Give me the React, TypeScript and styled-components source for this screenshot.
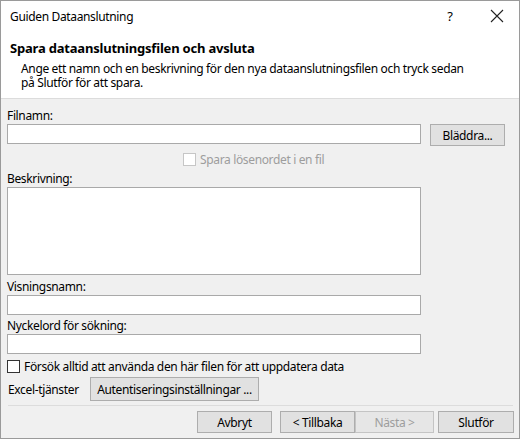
import React from "react";
import styled, { createGlobalStyle } from "styled-components";

const Global = createGlobalStyle`
  html, body { margin: 0; padding: 0; background: #f0f0f0; }
  body { font-family: "Noto Sans", "Open Sans", sans-serif; font-size: 12px; letter-spacing: -0.35px; color: #000; }
  * { box-sizing: border-box; }
`;

const Window = styled.div`
  width: 520px;
  height: 439px;
  border: 1px solid #9a9a9a;
  background: #f0f0f0;
  display: flex;
  flex-direction: column;
  overflow: hidden;
`;

const TitleBar = styled.div`
  height: 30px;
  background: #fff;
  display: flex;
  align-items: center;
  padding-left: 9px;
  font-size: 12px;
`;

const TitleText = styled.div`
  flex: 1;
`;

const Help = styled.div`
  width: 20px;
  text-align: center;
  font-size: 13px;
  margin-right: 30px;
`;

const CloseBtn = styled.div`
  width: 14px;
  height: 14px;
  margin-right: 15px;
  display: flex;
`;

const Header = styled.div`
  background: #fff;
  height: 68px;
  border-bottom: 1px solid #dcdcdc;
  padding: 0 9px;
`;

const Heading = styled.div`
  font-weight: 700;
  font-size: 13px;
  letter-spacing: -0.2px;
  line-height: 18px;
  margin-top: 8px;
`;

const Desc = styled.div`
  margin-top: 5px;
  padding-left: 11px;
  line-height: 14px;
  width: 468px;
`;

const Body = styled.div`
  padding: 9px 6px 0 6px;
  display: flex;
  flex-direction: column;
`;

const Label = styled.div<{ $top?: number }>`
  line-height: 16px;
  margin-top: ${(p) => p.$top ?? 0}px;
`;

const Row = styled.div`
  display: flex;
  align-items: flex-start;
  gap: 9px;
`;

const Input = styled.div<{ $h?: number }>`
  width: 414px;
  height: ${(p) => p.$h ?? 20}px;
  background: #fff;
  border: 1px solid #a9a9a9;
`;

const Button = styled.div<{ $w: number; $h?: number; $disabled?: boolean }>`
  width: ${(p) => p.$w}px;
  height: ${(p) => p.$h ?? 22}px;
  background: ${(p) => (p.$disabled ? "#e6e6e6" : "#e1e1e1")};
  border: 1px solid ${(p) => (p.$disabled ? "#c4c4c4" : "#adadad")};
  color: ${(p) => (p.$disabled ? "#9d9d9d" : "#000")};
  display: flex;
  align-items: center;
  justify-content: center;
  white-space: nowrap;
`;

const CheckRow = styled.div<{ $indent?: number; $top?: number; $disabled?: boolean }>`
  display: flex;
  align-items: center;
  gap: 4px;
  margin-left: ${(p) => p.$indent ?? 0}px;
  margin-top: ${(p) => p.$top ?? 0}px;
  color: ${(p) => (p.$disabled ? "#9d9d9d" : "#000")};
  height: 14px;
`;

const Box = styled.div<{ $disabled?: boolean }>`
  width: 13px;
  height: 13px;
  background: #fff;
  border: 1px solid ${(p) => (p.$disabled ? "#c6c6c6" : "#333")};
`;

const ServiceRow = styled.div`
  display: flex;
  align-items: center;
  margin-top: 4px;
  margin-left: 1px;
`;

const ServiceLabel = styled.span`
  width: 82px;
`;

const Separator = styled.div`
  height: 1px;
  background: #dcdcdc;
  margin: 4px 0 0 1px;
  width: 505px;
`;

const Footer = styled.div`
  display: flex;
  justify-content: flex-end;
  margin-top: 5px;
  width: 507px;
`;

const Gap = styled.div<{ $w: number }>`
  width: ${(p) => p.$w}px;
`;

export default function App() {
  return (
    <>
      <Global />
      <Window>
        <TitleBar>
          <TitleText>Guiden Dataanslutning</TitleText>
          <Help>?</Help>
          <CloseBtn>
            <svg width="14" height="14" viewBox="0 0 14 14">
              <path d="M1 1 L13 13 M13 1 L1 13" stroke="#222" strokeWidth="1.1" fill="none" />
            </svg>
          </CloseBtn>
        </TitleBar>
        <Header>
          <Heading>Spara dataanslutningsfilen och avsluta</Heading>
          <Desc>
            Ange ett namn och en beskrivning för den nya dataanslutningsfilen och tryck sedan på Slutför för att spara.
          </Desc>
        </Header>
        <Body>
          <Label>Filnamn:</Label>
          <Row>
            <Input />
            <Button $w={75}>Bläddra...</Button>
          </Row>
          <CheckRow $indent={176} $top={6} $disabled>
            <Box $disabled />
            <span>Spara lösenordet i en fil</span>
          </CheckRow>
          <Label $top={5}>Beskrivning:</Label>
          <Input $h={88} />
          <Label $top={4}>Visningsnamn:</Label>
          <Input $h={20} />
          <Label $top={3}>Nyckelord för sökning:</Label>
          <Input $h={20} />
          <CheckRow $top={5}>
            <Box />
            <span>Försök alltid att använda den här filen för att uppdatera data</span>
          </CheckRow>
          <ServiceRow>
            <ServiceLabel>Excel-tjänster</ServiceLabel>
            <Button $w={169} $h={24}>Autentiseringsinställningar ...</Button>
          </ServiceRow>
          <Separator />
          <Footer>
            <Button $w={75} $h={22}>Avbryt</Button>
            <Gap $w={8} />
            <Button $w={75} $h={22}>&lt; Tillbaka</Button>
            <Button $w={79} $h={22} $disabled>Nästa &gt;</Button>
            <Gap $w={4} />
            <Button $w={76} $h={22}>Slutför</Button>
          </Footer>
        </Body>
      </Window>
    </>
  );
}
